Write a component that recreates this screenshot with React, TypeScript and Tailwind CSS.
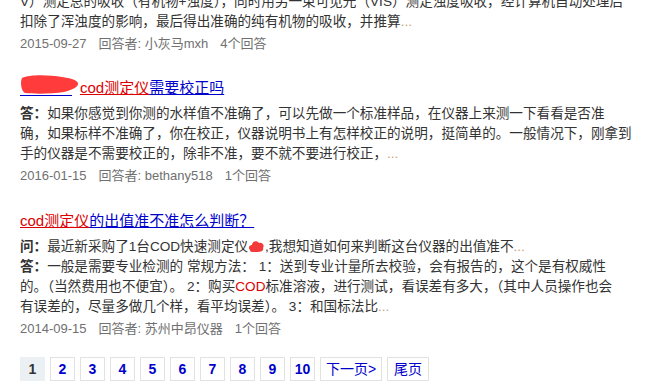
import React from 'react';

const font = { fontFamily: '"Liberation Sans", "Noto Sans CJK SC", sans-serif' };

const Dots: React.FC = () => <span className="text-[#c8a27a]">...</span>;

const Meta: React.FC<{ date: string; who: string; count: string }> = ({ date, who, count }) => (
  <div className="mt-[2px] flex h-5 items-center text-[13px] leading-5 text-[#707070]">
    <span className="mr-3">{date}</span>
    <span className="mr-3">回答者: {who}</span>
    <span>{count}</span>
  </div>
);

// red scribble that hides part of the first title
const Blob: React.FC = () => (
  <span className="relative inline-block h-[12px] w-[60px] align-baseline">
    <span className="absolute bottom-[-3px] left-0 h-px w-[52px] bg-[#0000cc]" />
    <svg className="absolute left-0 top-[-8px]" width="60" height="22" viewBox="0 0 60 22">
      <path
        d="M2 5 C10 1 30 2 42 4 C50 5 57 7 58 10 C59 14 52 17 44 19 C32 21 14 21 5 20 C1 18 0 9 2 5 Z"
        fill="#ff3b3b"
      />
    </svg>
  </span>
);

const SmallBlob: React.FC = () => (
  <svg className="inline-block align-[-2px]" width="17" height="14" viewBox="0 0 17 14">
    <path d="M2 11 C0 9 1 6 4 6 C4 2 9 1 11 4 C14 3 17 6 15 9 C16 12 13 13 10 13 L4 13 C3 13 2 12 2 11 Z" fill="#f23a3a" />
  </svg>
);

const App: React.FC = () => {
  const pages = ['1', '2', '3', '4', '5', '6', '7', '8', '9', '10'];

  return (
    <div className="h-[392px] w-[660px] overflow-hidden bg-white pl-5 text-[#333]" style={font}>
      {/* partial result at the top */}
      <div className="mt-[-8px] text-[13.6px] leading-5">
        <div>V）测定总的吸收（有机物+浊度），同时用另一束可见光（VIS）测定浊度吸收，经计算机自动处理后</div>
        <div>
          扣除了浑浊度的影响，最后得出准确的纯有机物的吸收，并推算<Dots />
        </div>
      </div>
      <Meta date="2015-09-27" who="小灰马mxh" count="4个回答" />

      {/* result 1 */}
      <div className="mt-[22px]">
        <a className="block h-6 text-[15px] leading-6 text-[#0000cc] underline">
          <Blob />
          <span className="text-[#dd0000] underline">cod测定仪</span>需要校正吗
        </a>
        <div className="mt-[4px] text-[13.6px] leading-5">
          <div>
            <b>答：</b>如果你感觉到你测的水样值不准确了，可以先做一个标准样品，在仪器上来测一下看看是否准
          </div>
          <div>确，如果标样不准确了，你在校正，仪器说明书上有怎样校正的说明，挺简单的。一般情况下，刚拿到</div>
          <div>
            手的仪器是不需要校正的，除非不准，要不就不要进行校正，<Dots />
          </div>
        </div>
        <Meta date="2016-01-15" who="bethany518" count="1个回答" />
      </div>

      {/* result 2 */}
      <div className="mt-[23px]">
        <a className="block h-6 text-[15px] leading-6 text-[#0000cc] underline">
          <span className="text-[#dd0000] underline">cod测定仪</span>的出值准不准怎么判断？
        </a>
        <div className="mt-[4px] text-[13.6px] leading-5">
          <div>
            <b>问：</b>最近新采购了1台COD快速测定仪<SmallBlob />,我想知道如何来判断这台仪器的出值准不<Dots />
          </div>
          <div>
            <b>答：</b>一般是需要专业检测的 常规方法： 1：送到专业计量所去校验，会有报告的，这个是有权威性
          </div>
          <div>
            的。（当然费用也不便宜）。 2：购买<span className="text-[#dd0000]">COD</span>
            标准溶液，进行测试，看误差有多大，（其中人员操作也会
          </div>
          <div>
            有误差的，尽量多做几个样，看平均误差）。 3：和国标法比<Dots />
          </div>
        </div>
        <Meta date="2014-09-15" who="苏州中昂仪器" count="1个回答" />
      </div>

      {/* pagination */}
      <div className="mt-[18px] flex gap-[5px]">
        {pages.map((p) =>
          p === '1' ? (
            <span key={p} className="flex h-6 w-[25px] items-center justify-center bg-[#ebf0f5] text-[14px] font-bold text-[#333]">
              {p}
            </span>
          ) : (
            <a key={p} className="flex h-6 w-[25px] items-center justify-center border border-[#e1e2e3] bg-white text-[14px] font-bold text-[#0000cc]">
              {p}
            </a>
          )
        )}
        <a className="flex h-6 w-[62px] items-center justify-center border border-[#e1e2e3] bg-white text-[14px] text-[#0000cc]">
          下一页&gt;
        </a>
        <a className="flex h-6 w-[42px] items-center justify-center border border-[#e1e2e3] bg-white text-[14px] text-[#0000cc]">
          尾页
        </a>
      </div>
    </div>
  );
};

export default App;
